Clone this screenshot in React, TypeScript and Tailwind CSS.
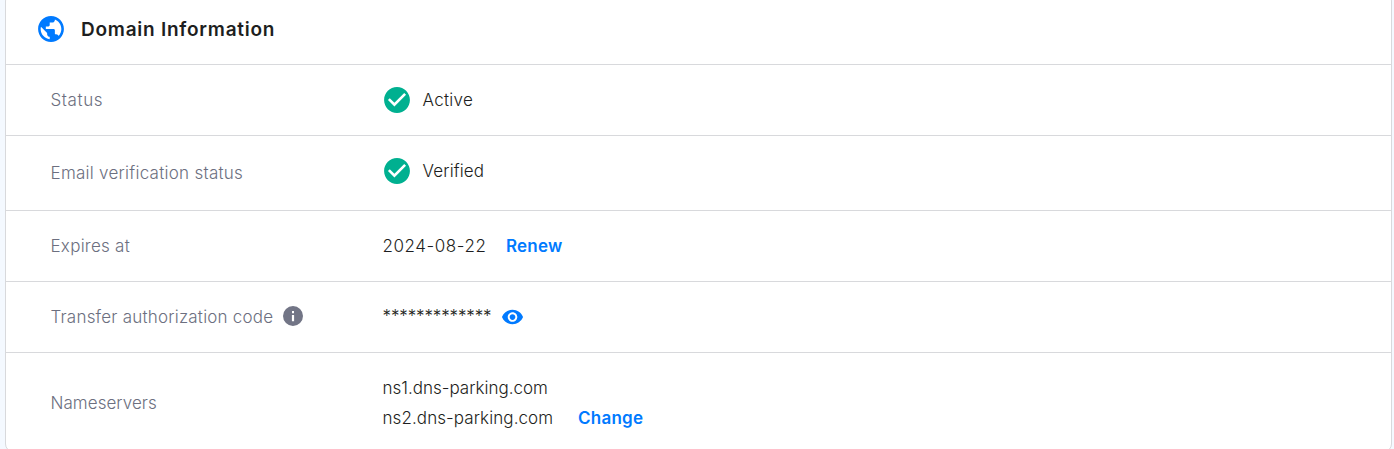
import type { ReactNode } from "react";
import { MdCheckCircle, MdPublic, MdRemoveRedEye } from "react-icons/md";

function InfoIcon({ className }: { className: string }) {
  return (
    <svg viewBox="0 0 20 20" className={className} fill="currentColor">
      <path fillRule="evenodd" d="M10 0a10 10 0 1 0 0 20 10 10 0 0 0 0-20ZM9 5h2v2.2H9ZM8.9 9h2.2v6.2H8.9Z" />
    </svg>
  );
}

function Row({ label, labelClass = "", className, children }: { label: ReactNode; labelClass?: string; className: string; children: ReactNode }) {
  return (
    <div className={`flex items-center border-t border-[#d8d9dc] pl-[44.5px] ${className}`}>
      <div className={`flex w-[332px] shrink-0 items-center text-[#6c6f80] ${labelClass}`}>{label}</div>
      {children}
    </div>
  );
}

function Status({ text, className }: { text: string; className: string }) {
  return (
    <div className="flex items-center">
      <MdCheckCircle className="-ml-[1.5px] mr-[10.5px] size-[31px] translate-x-[0.5px] -translate-y-[0.5px] text-[#00b090]" />
      <span className={className}>{text}</span>
    </div>
  );
}

export default function App() {
  return (
    <div className="h-[449px] overflow-hidden bg-[#f4f9ff] pl-[5px] pr-[2px] font-['Inter',sans-serif] text-[17px] font-light leading-[30px] text-[#1d1e20]">
      <section className="-mt-[7px] h-[459px] rounded-[8px] border border-[#d8d9dc] bg-white">
        <header className="flex h-[70px] items-center pl-[29px]">
          <MdPublic className="size-[31px] translate-x-[0.5px] -translate-y-[0.5px] text-[#007aff]" />
          <h2 className="ml-[15px] pt-[2px] text-[19px] font-semibold tracking-[0.75px]">Domain Information</h2>
        </header>
        <Row label={<span className="tracking-[0.6px]">Status</span>} className="h-[71px]">
          <Status text="Active" className="tracking-[0.3px]" />
        </Row>
        <Row label={<span className="tracking-[0.26px]">Email verification status</span>} className="h-[75px]">
          <div className="pb-[4px]">
            <Status text="Verified" className="tracking-[0.14px]" />
          </div>
        </Row>
        <Row label={<span className="tracking-[0.25px]">Expires at</span>} className="h-[71px]">
          <span className="w-[123.5px] tracking-[0.55px]">2024-08-22</span>
          <a className="font-semibold tracking-[0.2px] text-[#007aff]">Renew</a>
        </Row>
        <Row
          label={
            <>
              <span className="w-[232.5px] tracking-[0.21px]">Transfer authorization code</span>
              <InfoIcon className="size-5 -translate-y-px text-[#727586]" />
            </>
          }
          className="h-[71px]"
        >
          <span className="w-[118.5px] -translate-y-px tracking-[-0.13px]">*************</span>
          <MdRemoveRedEye className="size-[23px] -translate-y-[0.5px] text-[#007aff]" />
        </Row>
        <Row label={<span className="tracking-[0.05px]">Nameservers</span>} labelClass="-mt-[2px]" className="h-[102px]">
          <div className="-mt-[2px]">
            <div>ns1.dns-parking.com</div>
            <div className="flex">
              <span className="w-[195.5px] tracking-[0.08px]">ns2.dns-parking.com</span>
              <a className="font-semibold tracking-[0.25px] text-[#007aff]">Change</a>
            </div>
          </div>
        </Row>
      </section>
    </div>
  );
}
